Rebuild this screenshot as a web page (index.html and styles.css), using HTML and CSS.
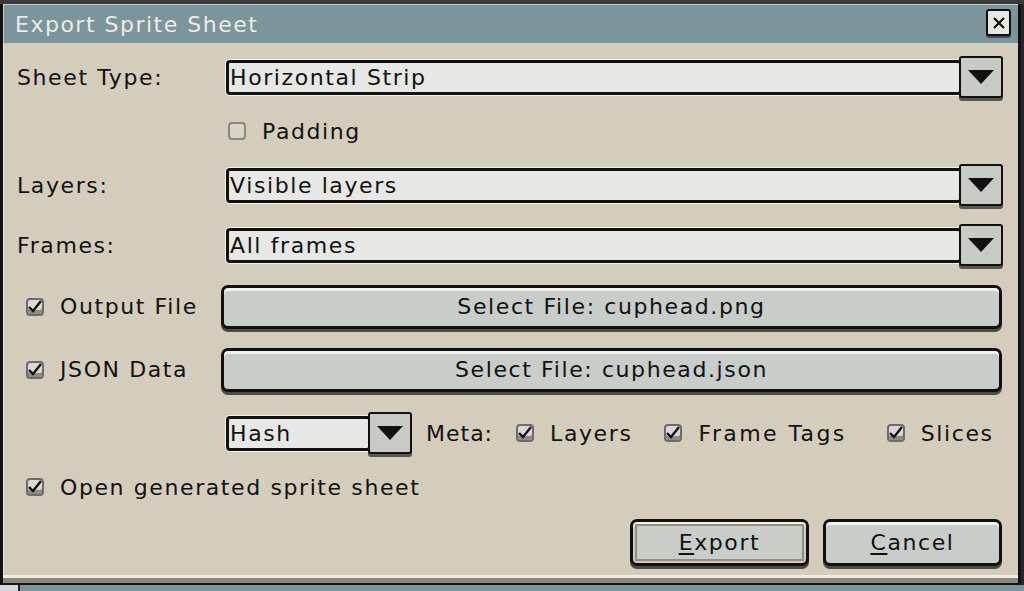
FILE: index.html
```html
<!DOCTYPE html>
<html>
<head>
<meta charset="utf-8">
<link rel="stylesheet" href="styles.css">
</head>
<body>
<div class="topstrip"></div>
<div class="window">
  <div class="titlebar">
    <span class="title">Export Sprite Sheet</span>
    <span class="close"><svg width="16" height="16" viewBox="0 0 16 16"><path d="M3 3 L13 13 M13 3 L3 13" stroke="#111" stroke-width="2.2" fill="none"/></svg></span>
  </div>
  <div class="body">
    <div class="row r1">
      <div class="label">Sheet Type:</div>
      <div class="combo"><div class="field">Horizontal Strip</div><div class="drop"><svg width="28" height="16" viewBox="0 0 28 16"><path d="M1 1 H27 L14 15 Z" fill="#111"/></svg></div></div>
    </div>
    <div class="row r2">
      <div class="label"></div>
      <div class="check pad"><span class="box off"></span><span>Padding</span></div>
    </div>
    <div class="row r3">
      <div class="label">Layers:</div>
      <div class="combo"><div class="field">Visible layers</div><div class="drop"><svg width="28" height="16" viewBox="0 0 28 16"><path d="M1 1 H27 L14 15 Z" fill="#111"/></svg></div></div>
    </div>
    <div class="row r4">
      <div class="label">Frames:</div>
      <div class="combo"><div class="field">All frames</div><div class="drop"><svg width="28" height="16" viewBox="0 0 28 16"><path d="M1 1 H27 L14 15 Z" fill="#111"/></svg></div></div>
    </div>
    <div class="row r5">
      <div class="label check"><span class="box on"><svg width="18" height="18" viewBox="0 0 18 18"><path d="M3 9 L7 13 L15 3" stroke="#111" stroke-width="2.4" fill="none"/></svg></span><span>Output File</span></div>
      <div class="btn wide">Select File: cuphead.png</div>
    </div>
    <div class="row r6">
      <div class="label check"><span class="box on"><svg width="18" height="18" viewBox="0 0 18 18"><path d="M3 9 L7 13 L15 3" stroke="#111" stroke-width="2.4" fill="none"/></svg></span><span>JSON Data</span></div>
      <div class="btn wide">Select File: cuphead.json</div>
    </div>
    <div class="row r7">
      <div class="label"></div>
      <div class="metarow">
        <div class="combo small"><div class="field">Hash</div><div class="drop"><svg width="28" height="16" viewBox="0 0 28 16"><path d="M1 1 H27 L14 15 Z" fill="#111"/></svg></div></div>
        <span class="meta">Meta:</span>
        <div class="check m1"><span class="box on"><svg width="18" height="18" viewBox="0 0 18 18"><path d="M3 9 L7 13 L15 3" stroke="#111" stroke-width="2.4" fill="none"/></svg></span><span>Layers</span></div>
        <div class="check m2"><span class="box on"><svg width="18" height="18" viewBox="0 0 18 18"><path d="M3 9 L7 13 L15 3" stroke="#111" stroke-width="2.4" fill="none"/></svg></span><span>Frame Tags</span></div>
        <div class="check m3"><span class="box on"><svg width="18" height="18" viewBox="0 0 18 18"><path d="M3 9 L7 13 L15 3" stroke="#111" stroke-width="2.4" fill="none"/></svg></span><span>Slices</span></div>
      </div>
    </div>
    <div class="row r8">
      <div class="check open"><span class="box on"><svg width="18" height="18" viewBox="0 0 18 18"><path d="M3 9 L7 13 L15 3" stroke="#111" stroke-width="2.4" fill="none"/></svg></span><span>Open generated sprite sheet</span></div>
    </div>
    <div class="row r9">
      <div class="btn action default"><span><u>E</u>xport</span></div>
      <div class="btn action"><span><u>C</u>ancel</span></div>
    </div>
  </div>
  <div class="shade"></div>
</div>
<div class="under"><span class="tab"></span></div>
</body>
</html>
```

FILE: styles.css
```css
* { box-sizing: border-box; }
html, body { margin: 0; padding: 0; }
body {
  width: 1024px;
  height: 591px;
  overflow: hidden;
  background: #262626;
  font-family: "DejaVu Sans", sans-serif;
  font-size: 22px;
  letter-spacing: 1.6px;
  color: #111;
}
.topstrip { height: 4px; background: #3a3a3a; }
.window {
  width: 1021px;
  height: 581px;
  border-left: 3px solid #121212;
  border-right: 3px solid #121212;
  background: #d5cdbc;
  display: flex;
  flex-direction: column;
}
.titlebar {
  height: 39px;
  background: #7c959d;
  border-top: 1px solid #c8d0d0;
  border-left: 1px solid #c8d0d0;
  display: flex;
  align-items: center;
  justify-content: space-between;
  padding: 0 7px 0 11px;
}
.title { color: #ecece4; font-size: 22px; letter-spacing: 1.5px; }
.close {
  width: 25px; height: 27px;
  background: #e6e6e2;
  border: 2px solid #111;
  border-radius: 3px;
  box-shadow: 0 2px 0 #4a4a4a;
  display: flex; align-items: center; justify-content: center;
  margin-top: -3px;
}
.body {
  flex: 1;
  border-left: 1px solid #eee8dc;
  padding: 14px 0 0 13px;
  display: flex;
  flex-direction: column;
}
.row { display: flex; align-items: center; }
.label { width: 209px; flex: none; }
.r1 { height: 40px; }
.r2 { height: 30px; margin-top: 19px; }
.r3 { height: 40px; margin-top: 19px; }
.r4 { height: 40px; margin-top: 20px; }
.r5 { height: 47px; margin-top: 18px; }
.r6 { height: 47px; margin-top: 16px; }
.r7 { height: 42px; margin-top: 19px; }
.r8 { height: 30px; margin-top: 18px; }
.r9 { height: 50px; margin-top: 15px; justify-content: flex-end; padding-right: 16px; gap: 14px; }

.combo { display: flex; align-items: center; width: 777px; }
.field {
  flex: 1;
  height: 35px;
  background: #e7e7e5;
  border: 3px solid #111;
  border-radius: 4px;
  box-shadow: 0 0 0 1px #f4f2ec;
  line-height: 29px;
  padding-left: 1px;
  overflow: hidden;
  white-space: nowrap;
}
.drop {
  width: 44px;
  height: 42px;
  margin-left: -3px;
  background: #c8cbc5;
  border: 2px solid #111;
  border-radius: 3px;
  box-shadow: 0 3px 0 #5a5650;
  display: flex; align-items: center; justify-content: center;
}
.combo.small { width: 186px; }
.check { display: flex; align-items: center; white-space: nowrap; }
.box { width: 18px; height: 18px; flex: none; display: inline-flex; margin-right: 16px; }
.box.off { border: 2px solid #8a8782; border-radius: 4px; background: #d9d3c6; }
.box.on { background: #d8d8d4; border: 2px solid #6f6c68; border-radius: 4px; box-shadow: inset 0 -4px 0 #8e8a84; }
.box.on svg { margin: -2px; }
.pad { margin-left: 2px; }
.r5 .label, .r6 .label { padding-left: 9px; width: 204px; }
.r8 .check { padding-left: 9px; }
.btn {
  background: #c9cdca;
  border: 3px solid #111;
  border-radius: 7px;
  box-shadow: inset 0 3px 0 #f2f2ee, 0 3px 0 #4e4a44;
  display: flex; align-items: center; justify-content: center;
  white-space: nowrap;
}
.btn.wide { width: 781px; height: 44px; }
.metarow { display: flex; align-items: center; }
.meta { margin-left: 14px; letter-spacing: 1px; }
.m1 { margin-left: 23px; }
.m2 { margin-left: 32px; }
.m3 { margin-left: 40px; }
.m2 span:last-child { letter-spacing: 2.4px; }
.btn.action { width: 179px; height: 47px; }
.btn.default span { display: flex; align-items: center; justify-content: center; width: 169px; height: 37px; border: 2px solid #9c8a7c; }
u { text-decoration-thickness: 2px; text-underline-offset: 3px; }
.shade {
  height: 10px;
  border-top: 3px solid #f2eee6;
  background: #8c857a;
  border-bottom: 2px solid #151515;
  margin-top: auto;
}
.under { height: 6px; background: #7c959d; display: flex; }
.tab { width: 20px; background: #d8d8d8; border-right: 2px solid #222; }
```
